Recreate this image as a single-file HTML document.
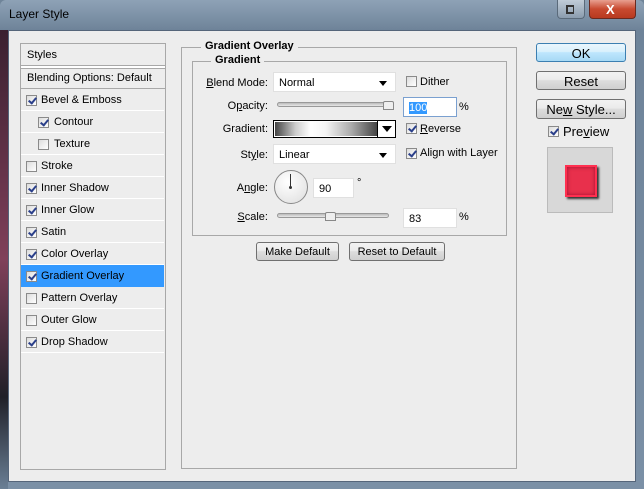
<!DOCTYPE html><html><head><style>
*{margin:0;padding:0;box-sizing:border-box}
body{width:644px;height:489px;overflow:hidden;font-family:"Liberation Sans",sans-serif;font-size:11px;color:#000;background:#6f8499;position:relative}
.abs{position:absolute}
#frame{left:0;top:0;width:644px;height:489px;background:linear-gradient(180deg,#8ea2b6 0,#6e8399 30px,#7b90a6 100%);border-radius:6px 6px 0 0}
#lf{left:0;top:30px;width:8px;height:459px;background:linear-gradient(180deg,#3a2030,#80405a 50%,#202028 80%,#6a7f95)}
#client{left:8px;top:30px;width:628px;height:452px;background:#ededed;border:1px solid #55657a}
.t{position:absolute;white-space:nowrap}
.r{position:absolute;white-space:nowrap;right:376px;text-align:right}
.grp{position:absolute;border:1px solid #a8a8a8}
.leg{position:absolute;background:#ededed;font-weight:bold;padding:0 4px;white-space:nowrap}
.row{position:absolute;left:21px;width:143px;height:22px;border-bottom:1px solid #fff}
.cb{position:absolute;width:11px;height:11px;border:1px solid #8a8a8a;background:linear-gradient(135deg,#dcdcdc,#fff)}
.cb.c::after{content:"";position:absolute;left:3px;top:0px;width:3px;height:6px;border-right:2px solid #2a3f8a;border-bottom:2px solid #2a3f8a;transform:rotate(40deg)}
.inp{position:absolute;background:#fff;border:1px solid #e0e0e0;height:20px;padding:4px 0 0 5px}
.dd::after{content:"";position:absolute;right:8px;top:8px;border:4px solid transparent;border-top:5px solid #000}
.btn{position:absolute;border:1px solid #707070;border-radius:3px;background:linear-gradient(180deg,#f2f2f2 0,#ebebeb 45%,#dddddd 50%,#cfcfcf 100%);text-align:center;font-size:12px}
.slider{position:absolute;height:5px;border:1px solid #999;border-radius:3px;background:linear-gradient(#bbb,#e8e8e8)}
.thumb{position:absolute;width:11px;height:9px;background:#eee;border:1px solid #888;border-radius:2px 2px 0 0}
</style></head><body>
<div id="frame" class="abs"></div>
<div id="lf" class="abs"></div>
<div class="t" style="left:9px;top:7px;font-size:12px;color:#000">Layer Style</div>
<div class="abs" style="left:557px;top:0;width:28px;height:19px;border:1px solid #5a6a7a;border-top:0;border-radius:0 0 4px 4px;background:linear-gradient(#c0ccd8,#8a9cae)"></div>
<div class="abs" style="left:566px;top:5px;width:8px;height:9px;border:2px solid #333;border-right-width:1px"></div>
<div class="abs" style="left:589px;top:0;width:47px;height:19px;border:1px solid #6a2a20;border-top:0;border-radius:0 0 4px 4px;background:linear-gradient(#e8a090,#c84a30 50%,#b83a20)"></div>
<div class="t" style="left:606px;top:2px;color:#fff;font-weight:bold;font-size:13px">X</div>
<div id="client" class="abs"></div>

<div class="grp" style="left:20px;top:43px;width:146px;height:427px"></div>
<div class="t" style="left:27px;top:49px">Styles</div>
<div class="abs" style="left:21px;top:65px;width:144px;height:4px;border-top:1px solid #a8a8a8;border-bottom:1px solid #a8a8a8;background:#fff"></div>
<div class="t" style="left:27px;top:72px">Blending Options: Default</div>
<div class="abs" style="left:21px;top:88px;width:144px;height:1px;background:#a8a8a8"></div>
<div class="row" style="top:89px"></div><div class="cb c" style="left:26px;top:95px"></div><div class="t" style="left:41px;top:94px">Bevel &amp; Emboss</div>
<div class="row" style="top:111px"></div><div class="cb c" style="left:38px;top:117px"></div><div class="t" style="left:54px;top:116px">Contour</div>
<div class="row" style="top:133px"></div><div class="cb" style="left:38px;top:139px"></div><div class="t" style="left:54px;top:138px">Texture</div>
<div class="row" style="top:155px"></div><div class="cb" style="left:26px;top:161px"></div><div class="t" style="left:41px;top:160px">Stroke</div>
<div class="row" style="top:177px"></div><div class="cb c" style="left:26px;top:183px"></div><div class="t" style="left:41px;top:182px">Inner Shadow</div>
<div class="row" style="top:199px"></div><div class="cb c" style="left:26px;top:205px"></div><div class="t" style="left:41px;top:204px">Inner Glow</div>
<div class="row" style="top:221px"></div><div class="cb c" style="left:26px;top:227px"></div><div class="t" style="left:41px;top:226px">Satin</div>
<div class="row" style="top:243px"></div><div class="cb c" style="left:26px;top:249px"></div><div class="t" style="left:41px;top:248px">Color Overlay</div>
<div class="row" style="top:265px;background:#3399ff;border:0;height:22px"></div><div class="cb c" style="left:26px;top:271px"></div><div class="t" style="left:41px;top:270px">Gradient Overlay</div>
<div class="row" style="top:287px"></div><div class="cb" style="left:26px;top:293px"></div><div class="t" style="left:41px;top:292px">Pattern Overlay</div>
<div class="row" style="top:309px"></div><div class="cb" style="left:26px;top:315px"></div><div class="t" style="left:41px;top:314px">Outer Glow</div>
<div class="row" style="top:331px"></div><div class="cb c" style="left:26px;top:337px"></div><div class="t" style="left:41px;top:336px">Drop Shadow</div>

<div class="grp" style="left:181px;top:47px;width:336px;height:422px"></div>
<div class="leg" style="left:201px;top:40px">Gradient Overlay</div>
<div class="grp" style="left:192px;top:61px;width:315px;height:175px"></div>
<div class="leg" style="left:211px;top:54px">Gradient</div>

<div class="r" style="top:77px"><u>B</u>lend Mode:</div>
<div class="inp dd" style="left:273px;top:72px;width:123px">Normal</div>
<div class="cb" style="left:406px;top:76px"></div><div class="t" style="left:420px;top:76px">Dither</div>

<div class="r" style="top:100px">O<u>p</u>acity:</div>
<div class="slider" style="left:277px;top:102px;width:112px"></div>
<div class="thumb" style="left:383px;top:101px"></div>
<div class="inp" style="left:403px;top:97px;width:54px;border:1px solid #7aa0d0"><span style="background:#3399ff;color:#fff">100</span></div>
<div class="t" style="left:459px;top:101px">%</div>

<div class="r" style="top:123px">Gradient:</div>
<div class="abs" style="left:273px;top:120px;width:123px;height:18px;border:1px solid #000;background:#fff"></div>
<div class="abs" style="left:275px;top:122px;width:102px;height:14px;background:linear-gradient(90deg,#444,#ccc 20%,#fff 35%,#f4f4f4 50%,#aaa 75%,#444)"></div>
<div class="abs" style="left:377px;top:121px;width:1px;height:16px;background:#000"></div>
<div class="abs" style="left:382px;top:126px;border:5px solid transparent;border-top:6px solid #000"></div>
<div class="cb c" style="left:406px;top:123px"></div><div class="t" style="left:420px;top:123px"><u>R</u>everse</div>

<div class="r" style="top:149px">St<u>y</u>le:</div>
<div class="inp dd" style="left:273px;top:144px;width:123px">Linear</div>
<div class="cb c" style="left:406px;top:148px"></div><div class="t" style="left:420px;top:147px">Align with Layer</div>

<div class="r" style="top:182px">A<u>n</u>gle:</div>
<div class="abs" style="left:274px;top:170px;width:34px;height:34px;border-radius:50%;border:1px solid #888;background:radial-gradient(circle at 40% 35%,#fff,#ddd)"></div>
<div class="abs" style="left:290px;top:174px;width:1px;height:13px;background:#333"></div>
<div class="abs" style="left:289px;top:186px;width:3px;height:3px;background:#333;border-radius:50%"></div>
<div class="inp" style="left:313px;top:178px;width:41px">90</div>
<div class="t" style="left:357px;top:177px">°</div>

<div class="r" style="top:211px"><u>S</u>cale:</div>
<div class="slider" style="left:277px;top:213px;width:112px"></div>
<div class="thumb" style="left:325px;top:212px"></div>
<div class="inp" style="left:403px;top:208px;width:54px">83</div>
<div class="t" style="left:459px;top:211px">%</div>

<div class="btn" style="left:256px;top:242px;width:83px;height:19px;font-size:11px;padding-top:3px">Make Default</div>
<div class="btn" style="left:349px;top:242px;width:96px;height:19px;font-size:11px;padding-top:3px">Reset to Default</div>

<div class="btn" style="left:536px;top:43px;width:90px;height:19px;border-color:#3c7fb1;background:linear-gradient(#eaf6fd,#d9f0fc 45%,#bee6fd 50%,#a7d9f5);padding-top:2px;font-size:13px">OK</div>
<div class="btn" style="left:536px;top:71px;width:90px;height:19px;padding-top:2px;font-size:13px">Reset</div>
<div class="btn" style="left:536px;top:99px;width:90px;height:20px;padding-top:2px;font-size:13px">Ne<u>w</u> Style...</div>
<div class="cb c" style="left:548px;top:126px"></div><div class="t" style="left:563px;top:124px;font-size:13px">Pre<u>v</u>iew</div>
<div class="abs" style="left:547px;top:147px;width:66px;height:66px;background:#d8d8d8;border:1px solid #bbb"></div>
<div class="abs" style="left:565px;top:165px;width:32px;height:32px;background:#e8304c;border:2px solid #ff3050;box-shadow:2px 2px 2px #333, inset 0 0 4px #a01030"></div>
</body></html>
